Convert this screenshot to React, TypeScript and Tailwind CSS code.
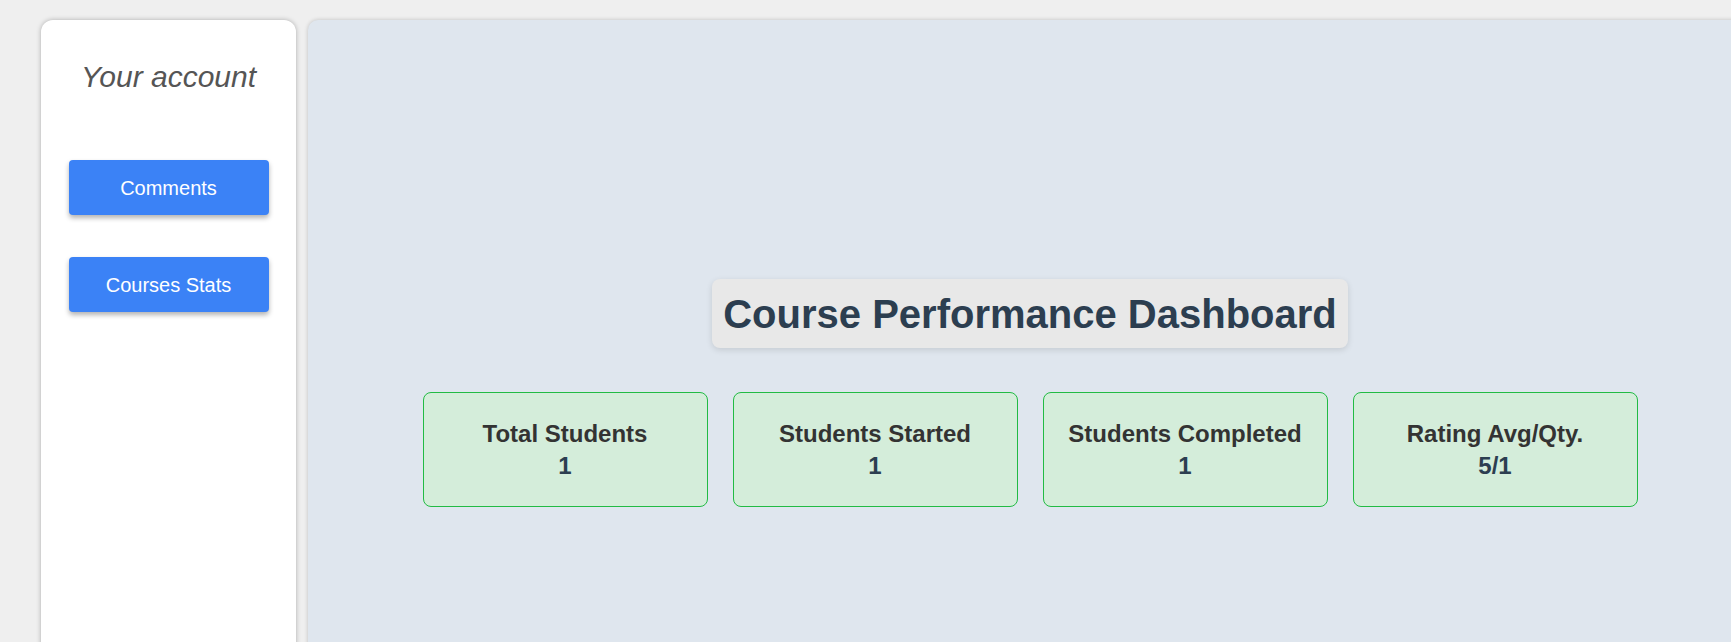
const stats = [
  { label: "Total Students", value: "1" },
  { label: "Students Started", value: "1" },
  { label: "Students Completed", value: "1" },
  { label: "Rating Avg/Qty.", value: "5/1" },
];

function Sidebar() {
  return (
    <aside className="flex w-[255px] h-[720px] shrink-0 flex-col items-center rounded-[12px] bg-white pt-[40px] shadow-[0_0_5px_rgba(0,0,0,0.28)]">
      <h2 className="text-[30px] leading-[34px] italic text-[#555555]">Your account</h2>
      <div className="mt-[66px] flex flex-col gap-[42px]">
        {["Comments", "Courses Stats"].map((label) => (
          <button
            key={label}
            className="flex h-[55px] w-[200px] items-center justify-center rounded-[4px] bg-[#3b82f6] text-[20px] text-white shadow-[0_3px_5px_rgba(0,0,0,0.3)]"
          >
            {label}
          </button>
        ))}
      </div>
    </aside>
  );
}

function StatCard({ label, value }: { label: string; value: string }) {
  return (
    <div className="flex h-[115px] flex-col items-center justify-center rounded-[8px] border border-[#22bb44] bg-[#d4edda]">
      <div className="text-[24px] leading-[32px] font-bold text-[#333333]">{label}</div>
      <div className="text-[24px] leading-[32px] font-bold text-[#2c3e50]">{value}</div>
    </div>
  );
}

export default function App() {
  return (
    <div className="flex h-screen w-full gap-[12px] overflow-hidden bg-[#efefef] pl-[41px] pt-[20px] font-['Liberation_Sans',Arial,sans-serif]">
      <Sidebar />
      <main className="flex h-[746px] w-[1444px] shrink-0 flex-col items-center justify-center rounded-[10px] bg-[#dfe6ee] shadow-[0_0_4px_rgba(0,0,0,0.2)]">
        <h1 className="flex h-[69px] items-center rounded-[8px] bg-[#e8e8e8] px-[11px] text-[40px] leading-[46px] font-bold text-[#2c3e50] shadow-[0_2px_6px_rgba(0,0,0,0.12)]">
          Course Performance Dashboard
        </h1>
        <div className="mt-[44px] grid grid-cols-[repeat(4,285px)] gap-[25px]">
          {stats.map((s) => (
            <StatCard key={s.label} label={s.label} value={s.value} />
          ))}
        </div>
      </main>
    </div>
  );
}
